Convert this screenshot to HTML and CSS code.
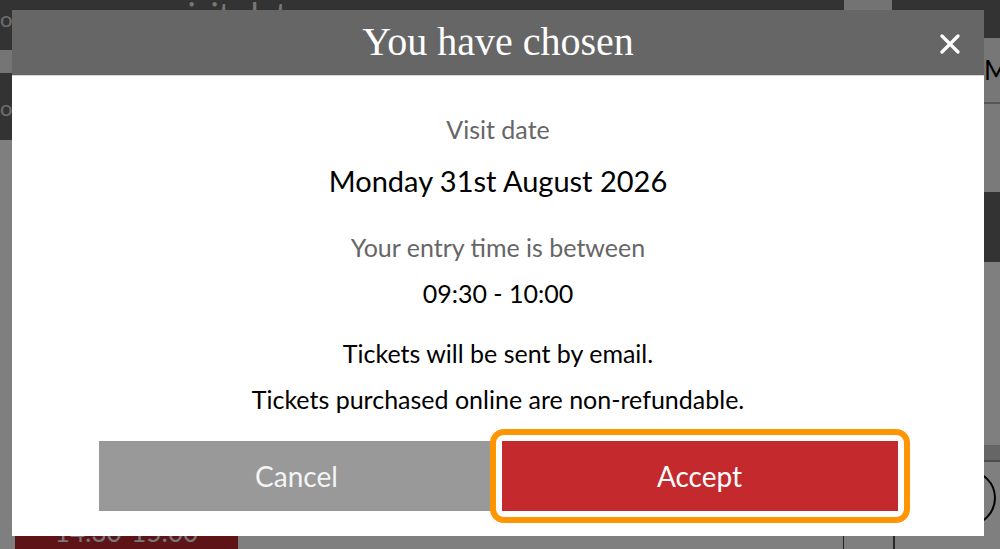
FILE: index.html
```html
<!DOCTYPE html>
<html lang="en">

<head>
    <meta charset="UTF-8">
    <title>Visit date</title>
    <link rel="stylesheet" href="styles.css">
</head>

<body>
    <div class="page">
        <div class="topbar">
            <span class="topbar-edge">o</span>
            <span class="topbar-title">visit date</span>
            <span class="topbar-tab"></span>
        </div>
        <div class="row">
            <div class="side">
                <div class="side-block dark"></div>
                <div class="side-block light"></div>
                <div class="side-block dark tall">o</div>
                <div class="side-fill"></div>
                <div class="slot">14:30-15:00</div>
            </div>
            <div class="main">
                <div class="main-fill"></div>
                <div class="main-foot">
                    <div class="foot-gap"></div>
                    <div class="foot-cell"></div>
                    <div class="foot-box"></div>
                </div>
            </div>
            <div class="edge">
                <div class="edge-block month">M</div>
                <div class="edge-block pale"></div>
                <div class="edge-block dark"></div>
                <div class="edge-block blank"></div>
                <div class="edge-block band"></div>
                <div class="edge-block clock"><span class="clock-ring"></span></div>
            </div>
        </div>
    </div>

    <div class="overlay"></div>

    <div class="modal">
        <div class="modal-head">
            <h2 class="modal-title">You have chosen</h2>
            <a href="#" class="close">
                <svg width="20" height="20" viewBox="0 0 20 20">
                    <path d="M2 2 L18 18 M18 2 L2 18" stroke="#fff" stroke-width="3.2" stroke-linecap="round" fill="none" />
                </svg>
            </a>
        </div>
        <div class="modal-body">
            <p class="label">Visit date</p>
            <p class="date">Monday 31st August 2026</p>
            <p class="label label-time">Your entry time is between</p>
            <p class="value">09:30 - 10:00</p>
            <p class="note note-first">Tickets will be sent by email.</p>
            <p class="note">Tickets purchased online are non-refundable.</p>
            <div class="actions">
                <a href="#" class="btn btn-cancel">Cancel</a>
                <span class="focus-ring">
                    <a href="#" class="btn btn-accept">Accept</a>
                </span>
            </div>
        </div>
    </div>
</body>

</html>
```

FILE: styles.css
```css
* {
    margin: 0;
    padding: 0;
    text-decoration: none;
    box-sizing: border-box;
}

body {
    width: 1000px;
    height: 549px;
    overflow: hidden;
    background: #fff;
    font-family: Lato, "Liberation Sans", sans-serif;
}

/* page under the dialog */
.page {
    display: flex;
    flex-direction: column;
    height: 560px;
}

.topbar {
    display: flex;
    align-items: flex-start;
    height: 38px;
    background: #666;
    color: #fff;
}

.topbar-edge {
    width: 12px;
    font-size: 22px;
    line-height: 38px;
    color: #ddd;
}

.topbar-title {
    flex: 1;
    margin-left: 158px;
    font-size: 34px;
    line-height: 30px;
    color: #eee;
}

.topbar-tab {
    width: 48px;
    height: 38px;
    margin-right: 108px;
    background: #e6e6e6;
}

.row {
    display: flex;
    flex: 1;
}

.side {
    width: 240px;
    display: flex;
    flex-direction: column;
}

.side-block {
    height: 12px;
    font-size: 22px;
    color: #ddd;
}

.side-block.dark {
    background: #666;
}

.side-block.light {
    height: 23px;
    background: #eaeaea;
}

.side-block.tall {
    height: 67px;
    line-height: 70px;
}

.side-fill {
    height: 367px;
}

.slot {
    height: 50px;
    margin: 0 2px 0 15px;
    background: #bc282c;
    color: #eee;
    font-size: 26px;
    line-height: 50px;
    text-align: center;
}

.main {
    flex: 1;
    display: flex;
    flex-direction: column;
}

.main-fill {
    flex: 1;
}

.main-foot {
    display: flex;
    height: 26px;
}

.foot-gap {
    width: 603px;
}

.foot-cell {
    width: 50px;
    border-left: 1px solid #444;
}

.foot-box {
    flex: 1;
    border-left: 2px solid #555;
    border-top: 2px solid #555;
}

.edge {
    width: 16px;
    display: flex;
    flex-direction: column;
}

.edge-block {
    height: 66px;
}

.edge-block.month {
    background: #eee;
    border-bottom: 2px solid #aaa;
    font-size: 26px;
    line-height: 64px;
    color: #000;
    overflow: hidden;
}

.edge-block.pale {
    height: 88px;
    background: #f4f4f4;
}

.edge-block.dark {
    height: 70px;
    background: #666;
}

.edge-block.blank {
    height: 183px;
}

.edge-block.band {
    height: 17px;
    background: #ccc;
    border-bottom: 2px solid #999;
}

.edge-block.clock {
    height: 80px;
    overflow: hidden;
}

.clock-ring {
    display: block;
    width: 56px;
    height: 56px;
    margin: 8px 0 0 -44px;
    border: 2px solid #000;
    border-radius: 50%;
}

.overlay {
    position: fixed;
    top: 0;
    left: 0;
    right: 0;
    bottom: 0;
    background: rgba(0, 0, 0, .5);
}

/* dialog */
.modal {
    position: fixed;
    top: 10px;
    left: 12px;
    width: 972px;
    background: #fff;
}

.modal-head {
    position: relative;
    height: 66px;
    background: #666;
    border-bottom: 1px solid #d6d6d6;
    text-align: center;
}

.modal-title {
    font-family: "Liberation Serif", serif;
    font-weight: normal;
    font-size: 40px;
    line-height: 64px;
    color: #fff;
}

.close {
    position: absolute;
    top: 24px;
    right: 24px;
    width: 20px;
    height: 20px;
}

.close svg {
    display: block;
}

.modal-body {
    padding: 38px 86px 25px;
    text-align: center;
}

.label {
    font-size: 25px;
    line-height: 30px;
    color: #666;
}

.label-time {
    margin-top: 34px;
}

.date {
    margin-top: 20px;
    font-size: 29px;
    line-height: 34px;
    color: #000;
}

.value {
    margin-top: 16px;
    font-size: 25px;
    line-height: 30px;
    color: #000;
}

.note {
    margin-top: 16px;
    font-size: 25px;
    line-height: 30px;
    color: #000;
}

.note-first {
    margin-top: 30px;
}

.actions {
    display: flex;
    justify-content: center;
    gap: 7px;
    margin-top: 27px;
}

.btn {
    display: block;
    width: 396px;
    height: 70px;
    font-size: 28px;
    line-height: 70px;
    text-align: center;
    color: #fff;
}

.btn-cancel {
    background: #999;
    color: #f4f4f4;
}

.btn-accept {
    background: #c4292e;
}

.focus-ring {
    display: block;
    margin: -12px;
    padding: 6px;
    border: 6px solid #ff9500;
    border-radius: 14px;
    background: #fff;
}
```
